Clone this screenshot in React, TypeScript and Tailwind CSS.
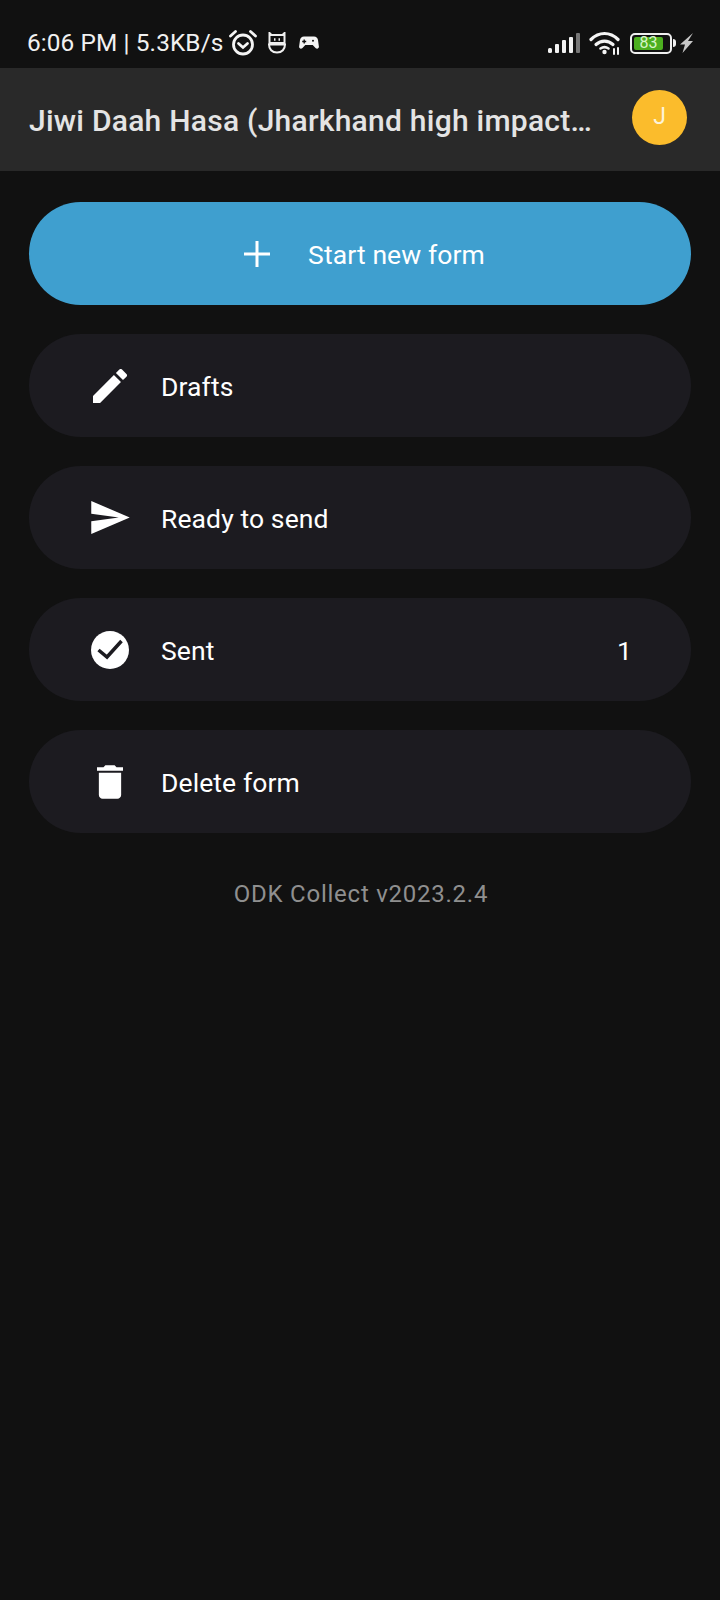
import type { ReactNode } from 'react'

function StatusIcons() {
  return (
    <div className="flex items-center">
      {/* signal */}
      <svg width="32" height="22" viewBox="0 0 32 22" className="mr-[9px]">
        <rect x="0" y="16" width="4" height="5" rx="1.5" fill="#f2f2f2" />
        <rect x="7" y="12" width="4" height="9" rx="1" fill="#f2f2f2" />
        <rect x="14" y="8" width="4" height="13" rx="1" fill="#f2f2f2" />
        <rect x="21" y="5" width="4" height="16" rx="1" fill="#f2f2f2" />
        <rect x="28" y="1" width="4" height="20" rx="1" fill="#777" />
      </svg>
      {/* wifi */}
      <svg width="32" height="24" viewBox="0 0 32 24" fill="none" stroke="#f4f4f4" strokeWidth="3.2" strokeLinecap="round" className="mr-[9px]">
        <path d="M2 8.500C10 .5 21 .5 29 8.500" />
        <path d="M7 13.500C12 9 19 9 24 13.500" />
        <path d="M11.500 17.500C14 15.800 17 15.800 19.500 17.500" strokeWidth="2.6" />
        <circle cx="15.500" cy="21" r="2.200" fill="#f4f4f4" stroke="none" />
        <path d="M25 18v5M29 17v6" strokeWidth="2" />
      </svg>
      {/* battery */}
      <div className="flex h-[21px] w-[42px] items-center rounded-[5px] border-2 border-[#efefef] p-[2px]">
        <div className="flex h-full w-[29px] items-center justify-center rounded-[2px] bg-[#4caf1f] text-[16px] leading-none text-[#d8f5c8]">
          83
        </div>
      </div>
      <div className="ml-[1px] mr-[4px] h-[8px] w-[3px] rounded-r-sm bg-[#efefef]" />
      <svg width="13" height="20" viewBox="0 0 13 20">
        <path d="M13 0L0 11.500h5L2.500 20 13 8H8z" fill="#c8c8c8" />
      </svg>
    </div>
  )
}

function MenuRow({ icon, label, count }: { icon: ReactNode; label: string; count?: string }) {
  return (
    <button type="button" className="flex h-[103px] w-full items-center rounded-[52px] bg-[#1c1b20] pl-[60px] pr-[59px] text-left">
      <span className="flex w-[42px] items-center justify-center">{icon}</span>
      <span className="ml-[30px] flex-1 pt-[3px] text-[26.5px] tracking-[0.1px] text-white">{label}</span>
      {count && <span className="pt-[3px] text-[26.5px] text-white">{count}</span>}
    </button>
  )
}

export default function App() {
  return (
    <div className="h-[1600px] w-[720px] overflow-hidden bg-[#111111] font-['Roboto',sans-serif]">
      {/* status bar */}
      <div className="flex h-[68px] items-center justify-between pl-[27px] pr-[27px] pt-[18px]">
        <div className="flex items-center text-[#f1f1f1]">
          <span className="text-[24.4px] tracking-[0.1px]">6:06 PM | 5.3KB/s</span>
          <svg width="28" height="26" viewBox="0 0 28 26" fill="none" stroke="#f4f4f4" strokeWidth="2.800" strokeLinecap="round" className="ml-[5px]">
            <circle cx="14" cy="14.500" r="9.500" />
            <path d="M9.500 13.500l4.500 4 4.500-4" />
            <path d="M1.500 6L6.500 1.500M26.500 6l-5-4.500" />
          </svg>
          <svg width="18" height="22" viewBox="0 0 18 22" fill="none" stroke="#f0f0f0" strokeWidth="2" className="ml-[11px]">
            <path d="M1.500 1l2 2h11l2-2v10h-15z" />
            <path d="M1 12.500h16c0 4.500-3 8-8 8s-8-3.500-8-8z" />
            <path d="M6 7.500h1.500M10.500 7.500H12" strokeWidth="2.500" />
          </svg>
          <svg width="20" height="14" viewBox="0 0 20 14" className="ml-[13px]">
            <path fillRule="evenodd" d="M5 .5h10c2.300 0 3.500 1.300 4 3.500l.9 6.500c.3 2-2 3-3.400 1.400L13.700 9H6.300l-2.800 2.900C2.100 13.500-.2 12.500.1 10.500L1 4C1.500 1.800 2.700.5 5 .5zM4.500 3.500v1.300H3.200v1.400h1.300v1.300h1.400V6.200h1.300V4.800H5.900V3.500zM14 3.800a1 1 0 100 2 1 1 0 000-2z" fill="#f4f4f4" />
          </svg>
        </div>
        <StatusIcons />
      </div>

      {/* app bar */}
      <div className="flex h-[103px] items-center justify-between bg-[#292929] pl-[29px] pr-[33px]">
        <h1 className="mt-[1px] text-[30px] font-medium tracking-[0.25px] text-[#e4e4e4]">Jiwi Daah Hasa (Jharkhand high impact…</h1>
        <div className="mb-[4px] flex h-[55px] w-[55px] shrink-0 items-center justify-center rounded-full bg-[#fbbc2c] text-[23px] text-[#fdf3d8]">J</div>
      </div>

      {/* actions */}
      <div className="flex flex-col gap-[29px] px-[29px] pt-[31px]">
        <button type="button" className="flex h-[103px] w-full items-center justify-center rounded-[52px] bg-[#3f9fcf] pl-[9px] text-[26.5px] tracking-[0.1px] text-white">
          <svg width="26" height="26" viewBox="0 0 26 26" className="mr-[38px]">
            <path d="M11.500 0h3v11.500H26v3H14.500V26h-3V14.500H0v-3h11.500z" fill="#fff" />
          </svg>
          <span className="pt-[3px]">Start new form</span>
        </button>
        <MenuRow
          label="Drafts"
          icon={
            <svg width="34" height="34" viewBox="3 3 18 18">
              <path fill="#fff" d="M3 17.250V21h3.750L17.810 9.940l-3.750-3.750L3 17.250zM20.710 7.040a1 1 0 000-1.410l-2.340-2.340a1 1 0 00-1.410 0l-1.830 1.830 3.750 3.750 1.830-1.830z" />
            </svg>
          }
        />
        <MenuRow
          label="Ready to send"
          icon={
            <svg width="39" height="33" viewBox="2 3 21 18">
              <path fill="#fff" d="M2.010 21L23 12 2.010 3 2 10l15 2-15 2z" />
            </svg>
          }
        />
        <MenuRow
          label="Sent"
          count="1"
          icon={
            <svg width="38" height="38" viewBox="0 0 38 38">
              <circle cx="19" cy="19" r="19" fill="#fff" />
              <path d="M7.500 19l8.500 7L30.500 10" fill="none" stroke="#1c1b20" strokeWidth="3.500" />
            </svg>
          }
        />
        <MenuRow
          label="Delete form"
          icon={
            <svg width="26" height="34" viewBox="5 3 14 18">
              <path fill="#fff" d="M6 19c0 1.100.9 2 2 2h8c1.100 0 2-.9 2-2V7H6v12zM19 4h-3.500l-1-1h-5l-1 1H5v2h14V4z" />
            </svg>
          }
        />
      </div>

      <p className="mt-[43px] pl-[2px] text-center text-[24px] tracking-[0.75px] text-[#8f8f8f]">ODK Collect v2023.2.4</p>
    </div>
  )
}
